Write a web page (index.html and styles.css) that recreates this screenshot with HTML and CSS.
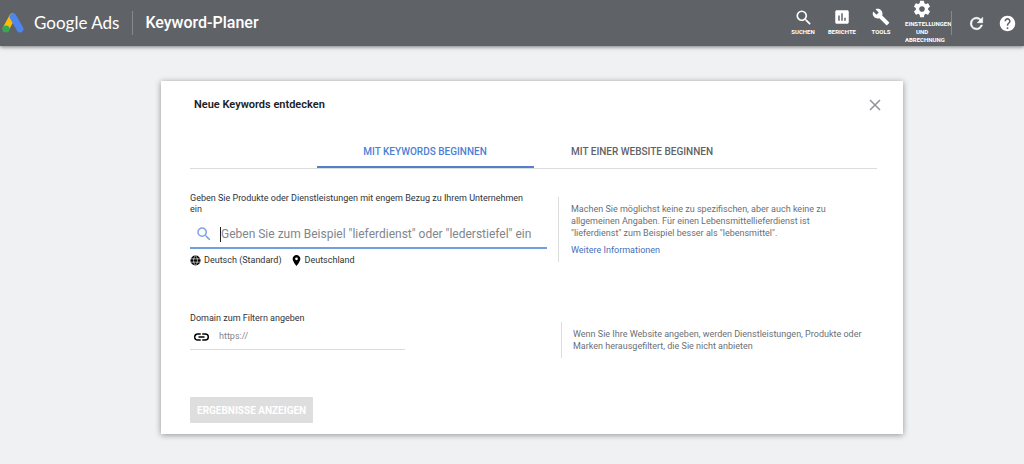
FILE: index.html
```html
<!DOCTYPE html>
<html lang="de">
<head>
<meta charset="utf-8">
<title>Keyword-Planer</title>
<meta name="viewport" content="width=device-width, initial-scale=1">
<link rel="stylesheet" href="styles.css">
</head>
<body>
<header class="topbar">
  <svg class="logo" viewBox="0 0 22 20" aria-hidden="true">
    <path d="M10.500 3.600 4 15.500" stroke="#fbbc04" stroke-width="6.500" stroke-linecap="round"/>
    <path d="M11 3.700 18 16" stroke="#4f86ee" stroke-width="6.800" stroke-linecap="round"/>
    <circle cx="4" cy="16" r="3.600" fill="#34a853"/>
  </svg>
  <span class="brand">Google Ads</span>
  <h1 class="product">Keyword-Planer</h1>
  <nav class="tools">
    <button class="tool" type="button">
      <svg class="tool-icon" viewBox="0 0 22 22"><path d="M15.500 14h-.79l-.28-.27A6.470 6.470 0 0 0 16 9.500 6.500 6.500 0 1 0 9.500 16c1.610 0 3.090-.59 4.230-1.570l.27.28v.79l5 4.990L20.490 19l-4.990-5zm-6 0C7.010 14 5 11.990 5 9.500S7.010 5 9.500 5 14 7.010 14 9.500 11.990 14 9.500 14z"/></svg>
      <span>SUCHEN</span>
    </button>
    <button class="tool" type="button">
      <svg class="tool-icon" viewBox="0 0 24 24"><path d="M19 3H5c-1.100 0-2 .9-2 2v14c0 1.100.9 2 2 2h14c1.100 0 2-.9 2-2V5c0-1.100-.9-2-2-2zM9 17H7v-7h2v7zm4 0h-2V7h2v10zm4 0h-2v-4h2v4z"/></svg>
      <span>BERICHTE</span>
    </button>
    <button class="tool" type="button">
      <svg class="tool-icon" viewBox="0 0 24 24"><path d="M22.700 19l-9.100-9.100c.9-2.300.4-5-1.500-6.900-2-2-5-2.400-7.400-1.300L9 6 6 9 1.600 4.700C.4 7.100.9 10.100 2.900 12.100c1.900 1.900 4.600 2.400 6.900 1.500l9.100 9.100c.4.4 1 .4 1.400 0l2.300-2.300c.5-.4.5-1.100.1-1.400z"/></svg>
      <span>TOOLS</span>
    </button>
    <button class="tool tool-settings" type="button">
      <svg class="tool-icon" viewBox="1 1 22 22"><path d="M19.430 12.980c.04-.32.07-.64.07-.98s-.03-.66-.07-.98l2.110-1.650c.19-.15.24-.42.12-.64l-2-3.460c-.12-.22-.39-.3-.61-.22l-2.490 1c-.52-.4-1.080-.73-1.690-.98l-.38-2.650A.49.49 0 0 0 14 2h-4c-.25 0-.46.18-.49.42l-.38 2.650c-.61.25-1.170.59-1.690.98l-2.490-1c-.23-.09-.49 0-.61.22l-2 3.460c-.13.22-.07.49.12.64l2.110 1.650c-.04.32-.07.65-.07.98s.03.66.07.98l-2.110 1.650c-.19.15-.24.42-.12.64l2 3.460c.12.22.39.3.61.22l2.490-1c.52.4 1.080.73 1.690.98l.38 2.650c.03.24.24.42.49.42h4c.25 0 .46-.18.49-.42l.38-2.650c.61-.25 1.170-.59 1.690-.98l2.490 1c.23.09.49 0 .61-.22l2-3.460c.12-.22.07-.49-.12-.64l-2.110-1.650zM12 15.500c-1.930 0-3.500-1.570-3.500-3.500s1.570-3.500 3.500-3.500 3.500 1.570 3.500 3.500-1.570 3.500-3.500 3.500z"/></svg>
      <span>EINSTELLUNGEN<br>UND<br>ABRECHNUNG</span>
    </button>
  </nav>
  <div class="utilities">
    <button class="round" type="button" aria-label="Aktualisieren">
      <svg class="round-icon" viewBox="1 1 22 22"><path stroke="#fff" stroke-width=".7" d="M17.650 6.350A7.960 7.960 0 0 0 12 4a8 8 0 1 0 7.730 10h-2.080A6 6 0 1 1 12 6c1.660 0 3.140.69 4.220 1.780L13 11h7V4l-2.350 2.350z"/></svg>
    </button>
    <button class="round" type="button" aria-label="Hilfe">
      <svg class="round-icon" viewBox="1 1 22 22"><path d="M12 2C6.480 2 2 6.480 2 12s4.480 10 10 10 10-4.480 10-10S17.520 2 12 2zm1 17h-2v-2h2v2zm2.070-7.750-.9.920C13.450 12.900 13 13.500 13 15h-2v-.5c0-1.100.45-2.100 1.170-2.830l1.240-1.260c.37-.36.59-.86.59-1.410 0-1.100-.9-2-2-2s-2 .9-2 2H8c0-2.210 1.790-4 4-4s4 1.790 4 4c0 .88-.36 1.680-.93 2.250z"/></svg>
    </button>
  </div>
</header>
<main class="dialog">
  <div class="dialog-head">
    <h2 class="dialog-title">Neue Keywords entdecken</h2>
    <button class="close" type="button" aria-label="Schließen">
      <svg viewBox="0 0 12 12"><path d="M1 1l10 10M11 1L1 11"/></svg>
    </button>
  </div>
  <div class="tabs" role="tablist">
    <button class="tab tab-active" type="button" role="tab" aria-selected="true">MIT KEYWORDS BEGINNEN</button>
    <button class="tab" type="button" role="tab" aria-selected="false">MIT EINER WEBSITE BEGINNEN</button>
  </div>
  <form class="form">
    <section class="row">
      <div class="field">
        <label class="label" for="keywords">Geben Sie Produkte oder Dienstleistungen mit engem Bezug zu Ihrem Unternehmen ein</label>
        <div class="keyword-box">
          <svg class="box-icon" viewBox="0 0 24 24"><path d="M15.500 14h-.79l-.28-.27A6.470 6.470 0 0 0 16 9.500 6.500 6.500 0 1 0 9.500 16c1.610 0 3.090-.59 4.230-1.570l.27.28v.79l5 4.990L20.490 19l-4.990-5zm-6 0C7.010 14 5 11.990 5 9.500S7.010 5 9.500 5 14 7.010 14 9.500 11.990 14 9.500 14z"/></svg>
          <span class="caret"></span>
          <input class="keyword-input" id="keywords" type="text" placeholder="Geben Sie zum Beispiel &quot;lieferdienst&quot; oder &quot;lederstiefel&quot; ein">
        </div>
        <div class="targets">
          <button class="target" type="button">
            <svg class="target-icon" viewBox="0 0 12 12"><circle cx="6" cy="6" r="5.500"/><path class="grid" d="M1 4.200h10M1 7.800h10M6 .8C3.200 3.200 3.200 8.800 6 11.200M6 .8c2.800 2.400 2.800 8 0 10.400"/></svg>
            <span>Deutsch (Standard)</span>
          </button>
          <button class="target" type="button">
            <svg class="target-icon" viewBox="2 2 20 20"><path d="M12 2C8.130 2 5 5.130 5 9c0 5.250 7 13 7 13s7-7.750 7-13c0-3.870-3.130-7-7-7zm0 9.500a2.500 2.500 0 1 1 0-5 2.500 2.500 0 0 1 0 5z"/></svg>
            <span>Deutschland</span>
          </button>
        </div>
      </div>
      <aside class="hint">
        <p>Machen Sie möglichst keine zu spezifischen, aber auch keine zu allgemeinen Angaben. Für einen Lebensmittellieferdienst ist "lieferdienst" zum Beispiel besser als "lebensmittel".</p>
        <a class="more" href="#info">Weitere Informationen</a>
      </aside>
    </section>
    <section class="row row-domain">
      <div class="field">
        <label class="label" for="domain">Domain zum Filtern angeben</label>
        <div class="domain-box">
          <svg class="link-icon" viewBox="2 7 20 10"><path d="M3.900 12c0-1.710 1.390-3.100 3.100-3.100h4V7H7a5 5 0 0 0 0 10h4v-1.900H7c-1.710 0-3.100-1.390-3.100-3.100zM8 13h8v-2H8v2zm9-6h-4v1.900h4a3.100 3.100 0 0 1 0 6.200h-4V17h4a5 5 0 0 0 0-10z"/></svg>
          <input class="domain-input" id="domain" type="text" placeholder="https://">
        </div>
      </div>
      <aside class="hint">
        <p>Wenn Sie Ihre Website angeben, werden Dienstleistungen, Produkte oder Marken herausgefiltert, die Sie nicht anbieten</p>
      </aside>
    </section>
    <button class="submit" type="submit" disabled>ERGEBNISSE ANZEIGEN</button>
  </form>
</main>
</body>
</html>
```

FILE: styles.css
```css
* {
  box-sizing: border-box;
}

body {
  margin: 0;
  background: #f0f1f3;
  color: #303336;
  font-family: Roboto, "Liberation Sans", sans-serif;
  font-size: 9px;
  line-height: 11px;
}

button,
input {
  margin: 0;
  padding: 0;
  border: 0;
  background: none;
  color: inherit;
  font: inherit;
}

h1,
h2,
p {
  margin: 0;
}

svg {
  display: block;
  flex: none;
}

.topbar {
  display: flex;
  align-items: center;
  height: 46px;
  padding: 0 1px 0 2px;
  background: #5f6368;
  box-shadow: 0 1px 4px rgba(0, 0, 0, 0.5);
  color: #fff;
}

.logo {
  width: 22px;
  height: 20px;
  fill: none;
}

.brand {
  margin-left: 10px;
  font-family: Lato, sans-serif;
  font-size: 17px;
  line-height: 24px;
  white-space: nowrap;
}

.product {
  margin-left: 13px;
  padding-left: 12px;
  border-left: 1px solid #85888c;
  font-size: 16px;
  font-weight: 500;
  line-height: 24px;
  white-space: nowrap;
}

.tools {
  display: flex;
  align-items: center;
  gap: 5px;
  height: 100%;
  margin-left: auto;
  padding-bottom: 3px;
}

.tool {
  display: flex;
  flex-direction: column;
  align-items: center;
  gap: 2px;
  width: 34px;
  font-size: 6px;
  font-weight: 700;
  line-height: 8px;
}

.tool-icon {
  width: 18px;
  height: 18px;
  fill: #fff;
}

.tool-settings {
  align-items: stretch;
  margin-left: 2px;
}

.tool-settings .tool-icon {
  align-self: center;
}

.utilities {
  display: flex;
  align-items: center;
  height: 24px;
  margin-left: 12px;
  padding-left: 9px;
  border-left: 1px solid #85888c;
}

.round {
  display: flex;
  justify-content: center;
  width: 31px;
}

.round-icon {
  width: 17px;
  height: 17px;
  fill: #fff;
}

.dialog {
  margin: 35px 121px 30px 161px;
  padding: 16px 26px 11px 29px;
  background: #fff;
  box-shadow: 0 1px 6px rgba(0, 0, 0, 0.4);
}

.dialog-head {
  display: flex;
  align-items: center;
  justify-content: space-between;
  height: 16px;
  padding-left: 4px;
}

.dialog-title {
  color: #202124;
  font-size: 11px;
  font-weight: 600;
  line-height: 16px;
}

.close svg {
  width: 12px;
  height: 12px;
  margin-right: -4px;
  fill: none;
  stroke: #8f9296;
  stroke-width: 1.500;
}

.tabs {
  display: flex;
  justify-content: center;
  margin-top: 21px;
  border-bottom: 1px solid #dadce0;
}

.tab {
  width: 217px;
  height: 34px;
  padding-top: 2px;
  border-bottom: 2px solid transparent;
  color: #5f6368;
  font-size: 10px;
  font-weight: 500;
}

.tab-active {
  border-bottom-color: #5580c8;
  color: #4a7fd8;
}

.form {
  padding-top: 24px;
}

.row {
  display: grid;
  grid-template-columns: 357px 1fr;
  column-gap: 11px;
}

.label {
  display: block;
  max-width: 340px;
}

.keyword-box {
  display: flex;
  align-items: center;
  height: 34px;
  padding: 6px 0 0 5px;
  border-bottom: 2px solid #6f9fdc;
}

.box-icon {
  width: 18px;
  height: 18px;
  fill: #7da2ea;
}

.caret {
  width: 1px;
  height: 15px;
  margin-left: 7px;
  background: #202124;
}

.keyword-input {
  flex: 1;
  min-width: 0;
  font-size: 12px;
  line-height: 18px;
}

.keyword-input::placeholder,
.domain-input::placeholder {
  color: #80868b;
  opacity: 1;
}

.targets {
  display: flex;
  gap: 9px;
  padding-top: 6px;
}

.target {
  display: flex;
  align-items: center;
  gap: 3px;
}

.target-icon {
  width: 11px;
  height: 11px;
  fill: #000;
}

.grid {
  fill: none;
  stroke: #fff;
  stroke-width: 0.700;
}

.hint {
  align-self: start;
  margin-top: 4px;
  padding: 6px 0 6px 12px;
  border-left: 1px solid #dadce0;
  color: #6b6f74;
  line-height: 12px;
}

.hint p {
  max-width: 290px;
}

.more {
  display: inline-block;
  margin-top: 5px;
  color: #4470bd;
  text-decoration: none;
}

.row-domain {
  column-gap: 14px;
  margin-top: 47px;
}

.domain-box {
  display: flex;
  align-items: center;
  width: 215px;
  height: 26px;
  padding-left: 4px;
  border-bottom: 1px solid #dadce0;
}

.link-icon {
  width: 15px;
  height: 8px;
  fill: #000;
}

.domain-input {
  flex: 1;
  min-width: 0;
  margin-left: 10px;
}

.row-domain .hint {
  align-self: end;
  margin-bottom: -8px;
  padding-left: 11px;
}

.submit {
  height: 26px;
  margin-top: 47px;
  padding: 0 7px;
  border-radius: 1px;
  background: #dedede;
  color: #fff;
  font-size: 10px;
  font-weight: 700;
}
```
